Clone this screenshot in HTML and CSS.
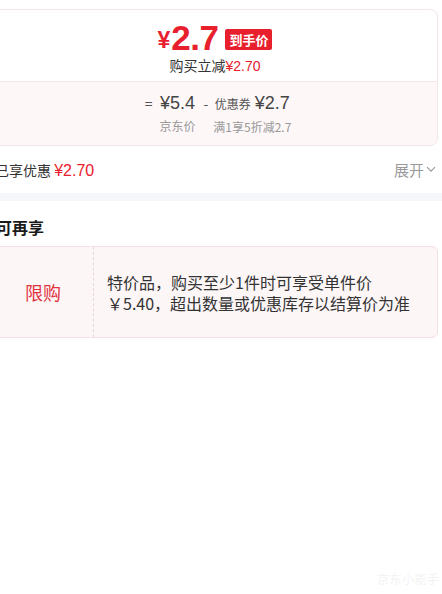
FILE: index.html
```html
<!DOCTYPE html>
<html lang="zh-CN">
<head>
<meta charset="utf-8">
<link rel="stylesheet" href="styles.css">
</head>
<body>
<div class="page">
  <div class="price-card">
    <div class="price-top">
      <div class="price-line">
        <span class="yen">¥</span><span class="big">2.7</span><span class="badge">到手价</span>
      </div>
      <div class="save">购买立减<span class="red">¥2.70</span></div>
    </div>
    <div class="price-calc">
      <span class="op">=</span>
      <div class="col">
        <span class="amt">¥5.4</span>
        <span class="lbl">京东价</span>
      </div>
      <span class="op minus">-</span>
      <div class="col">
        <span class="amt"><span class="tag">优惠券</span>¥2.7</span>
        <span class="lbl">满1享5折减2.7</span>
      </div>
    </div>
  </div>

  <div class="enjoy-row">
    <div class="enjoy-left">已享优惠 <span class="enjoy-amt">¥2.70</span></div>
    <div class="expand">展开
      <svg width="10" height="7" viewBox="0 0 10 7"><path d="M1 1.2 L5 5.2 L9 1.2" fill="none" stroke="#999" stroke-width="1.1"/></svg>
    </div>
  </div>
</div>

<div class="band"></div>

<div class="page">
  <div class="title">可再享</div>
  <div class="limit-card">
    <div class="limit-tag">限购</div>
    <div class="limit-text">特价品，购买至少1件时可享受单件价<br>￥5.40，超出数量或优惠库存以结算价为准</div>
  </div>
</div>

<div class="watermark">京东小能手</div>
</body>
</html>
```

FILE: styles.css
```css
html, body {
  margin: 0;
  padding: 0;
  background: #fff;
  overflow: hidden;
  width: 442px;
  height: 594px;
}
body {
  font-family: "Noto Sans CJK SC", "Noto Sans", sans-serif;
  color: #333;
  position: relative;
}
.page {
  width: 448px;
  margin-left: -8px;
  box-sizing: border-box;
  padding-right: 2px;
}
.price-card {
  margin-top: 9px;
  border: 1px solid #f3e4e6;
  border-radius: 8px;
  overflow: hidden;
  background: #fff;
}
.price-top {
  height: 71px;
  display: flex;
  flex-direction: column;
  align-items: center;
  border-bottom: 1px solid #f5e8ea;
}
.price-line {
  display: flex;
  align-items: center;
  height: 36px;
  margin-top: 10px;
  color: #e8202e;
  font-family: "Liberation Sans", "Noto Sans CJK SC", sans-serif;
  font-weight: 700;
}
.yen {
  font-size: 23px;
  margin-top: 5px;
  margin-right: 1px;
}
.big {
  font-size: 35px;
  letter-spacing: -0.5px;
}
.badge {
  margin-left: 7px;
  margin-top: 3px;
  background: #e8202e;
  color: #fff;
  font-family: "Noto Sans CJK SC", sans-serif;
  font-size: 13px;
  font-weight: 700;
  height: 21px;
  line-height: 21px;
  padding: 0 4px;
  border-radius: 2px;
}
.save {
  font-size: 14px;
  line-height: 18px;
  margin-top: 0;
  color: #333;
}
.red {
  color: #e8202e;
  font-family: "Liberation Sans", sans-serif;
}
.price-calc {
  background: #fdf7f8;
  height: 63px;
  display: flex;
  justify-content: center;
  align-items: flex-start;
  padding-top: 9px;
  box-sizing: border-box;
}
.op {
  font-size: 14px;
  color: #555;
  line-height: 24px;
  margin: 0 7px 0 6px;
}
.op.minus {
  margin: 0 5px 0 8px;
}
.col {
  display: flex;
  flex-direction: column;
  align-items: center;
}
.amt {
  font-family: "Liberation Sans", "Noto Sans CJK SC", sans-serif;
  font-size: 18px;
  color: #444;
  line-height: 24px;
  font-weight: 500;
  display: flex;
  align-items: baseline;
  gap: 4px;
}
.tag {
  font-family: "Noto Sans CJK SC", sans-serif;
  font-size: 12px;
  color: #555;
  font-weight: 400;
}
.lbl {
  font-size: 12px;
  color: #999;
  line-height: 16px;
  margin-top: 3px;
}
.enjoy-row {
  height: 47px;
  display: flex;
  align-items: center;
  justify-content: space-between;
  padding-left: 3px;
  padding-right: 2px;
}
.enjoy-left {
  font-size: 14px;
  color: #333;
}
.enjoy-amt {
  font-family: "Liberation Sans", sans-serif;
  font-size: 16px;
  color: #e8202e;
}
.expand {
  font-size: 15px;
  color: #999;
  display: flex;
  align-items: center;
  gap: 2px;
}
.band {
  height: 8px;
  background: #f6f7fa;
}
.title {
  font-size: 16px;
  font-weight: 700;
  color: #1a1a1a;
  padding-left: 4px;
  margin-top: 15px;
  line-height: 22px;
}
.limit-card {
  margin-top: 8px;
  height: 92px;
  box-sizing: border-box;
  border: 1px solid #f2e0e3;
  border-radius: 6px;
  background: #fdf6f7;
  display: flex;
}
.limit-tag {
  width: 100px;
  flex-shrink: 0;
  border-right: 1px dashed #e8d6d9;
  display: flex;
  align-items: center;
  justify-content: center;
  font-size: 18px;
  color: #e2343f;
}
.limit-text {
  align-self: center;
  padding-left: 13px;
  font-size: 16px;
  line-height: 21px;
  color: #333;
  margin-top: 1px;
}
.watermark {
  position: absolute;
  left: 377px;
  top: 570px;
  font-size: 12px;
  color: #f3f3f3;
  letter-spacing: 0.5px;
}
```
